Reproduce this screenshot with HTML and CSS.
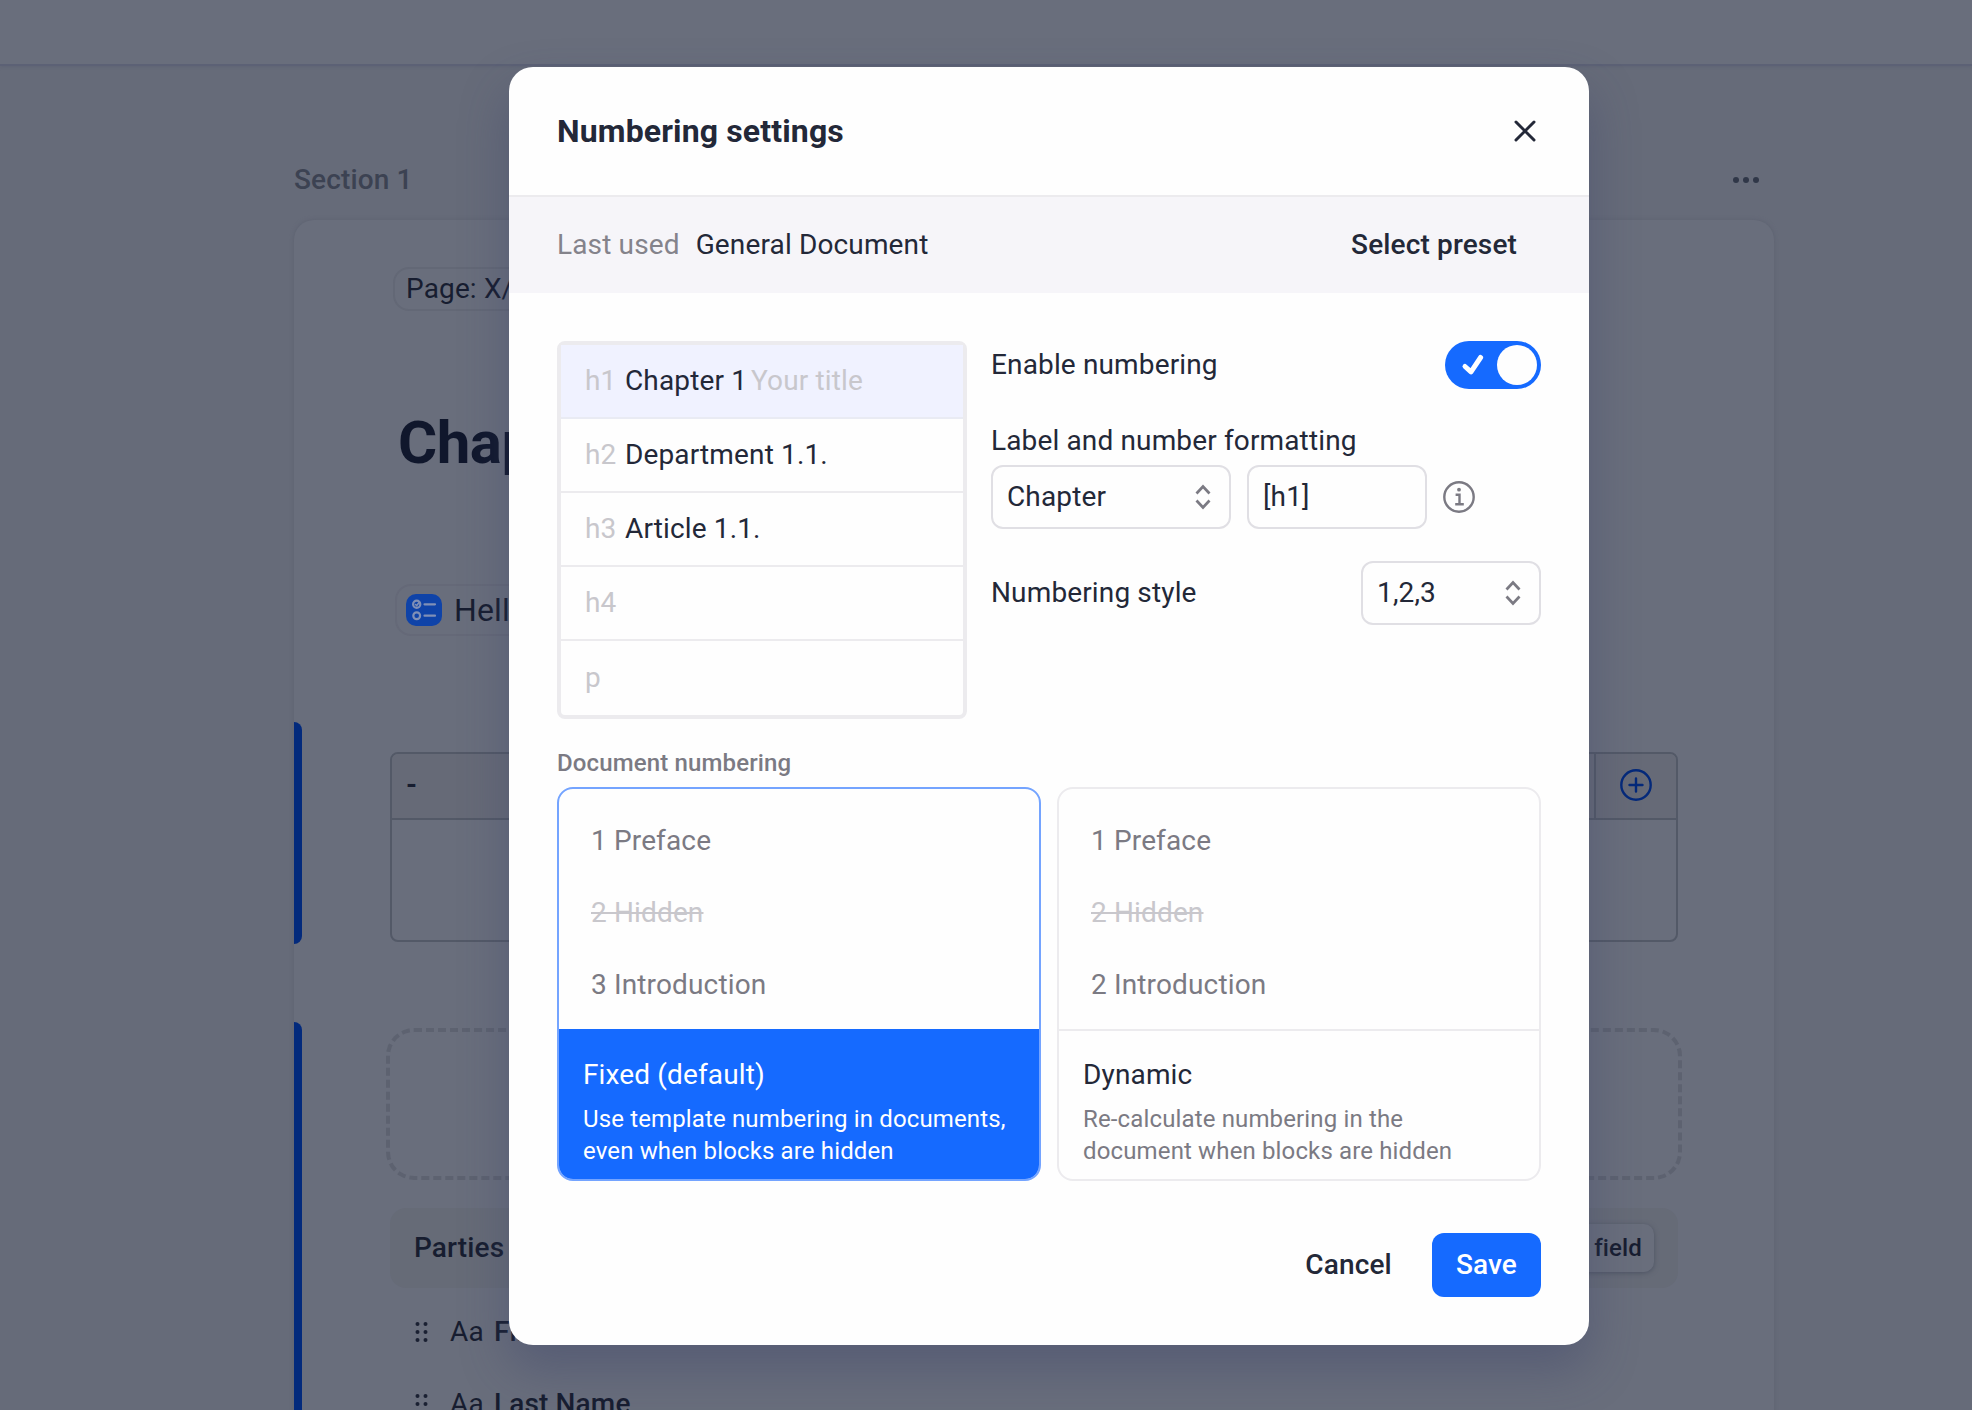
FILE: index.html
```html
<!DOCTYPE html>
<html lang="en">
<head>
<meta charset="utf-8">
<title>Numbering settings</title>
<link rel="stylesheet" href="styles.css">
</head>
<body>
<main class="editor">
  <div class="topbar"></div>
  <div class="section-head">
    <span>Section 1</span>
    <svg width="22" height="8" viewBox="0 0 22 8" fill="#303748"><circle cx="2" cy="4" r="3"/><circle cx="12" cy="4" r="3"/><circle cx="22" cy="4" r="3"/></svg>
  </div>
  <div class="paper">
    <div class="page-chip">Page: X/Y</div>
    <div class="doc-title">Chap</div>
    <div class="question-chip">
      <svg width="36" height="32" viewBox="0 0 36 32"><rect width="36" height="32" rx="10" fill="#0f43a8"/><g fill="none" stroke="#8090b6" stroke-width="2.2" stroke-linecap="round"><circle cx="10.700" cy="10.300" r="3.6"/><circle cx="10.700" cy="21.700" r="3.4"/><path d="M18.500 10.300h10.500M18.500 21.700h10.500"/><path d="M9.500 10.500l1.200 1 2.800-3.500" stroke-width="1.600"/></g></svg>
      <span>Hello</span>
    </div>
    <div class="block block-table">
      <div class="table">
        <div class="table-head"><span class="cell">-</span><span class="cell-add"><svg width="32" height="32" viewBox="0 0 32 32" fill="none" stroke="#04297a" stroke-width="2.4" stroke-linecap="round"><circle cx="16" cy="16" r="14.700"/><path d="M16 9.500v13M9.500 16h13"/></svg></span></div>
      </div>
    </div>
    <div class="block block-parties">
      <div class="dropzone"></div>
      <div class="parties"><span>Parties</span><span class="add-field">Add field</span></div>
      <div class="field-row"><svg width="14" height="22" viewBox="0 0 14 22"><use href="#grip"/></svg><span class="type">Aa</span><b>First Name</b></div>
      <div class="field-row"><svg width="14" height="22" viewBox="0 0 14 22"><use href="#grip"/></svg><span class="type">Aa</span><b>Last Name</b></div>
    </div>
  </div>
</main>

<div class="modal" role="dialog">
  <header class="modal-head">
    <h2>Numbering settings</h2>
    <svg width="24" height="24" viewBox="0 0 24 24" fill="none" stroke="#232838" stroke-width="3" stroke-linecap="round"><path d="M3 3l18 18M21 3L3 21"/></svg>
  </header>
  <div class="preset-bar"><span class="muted">Last used</span><span>General Document</span><span class="preset-btn">Select preset</span></div>
  <div class="modal-body">
    <div class="settings">
      <div class="levels">
        <div class="level active"><i>h1</i><span>Chapter 1</span><em>Your title</em></div>
        <div class="level"><i>h2</i><span>Department 1.1.</span></div>
        <div class="level"><i>h3</i><span>Article 1.1.</span></div>
        <div class="level"><i>h4</i></div>
        <div class="level"><i>p</i></div>
      </div>
      <div class="options">
        <div class="row toggle-row"><span>Enable numbering</span>
          <div class="toggle"><svg width="24" height="24" viewBox="0 0 24 24" fill="none" stroke="#fff" stroke-width="5" stroke-linecap="round" stroke-linejoin="round"><path d="M4 13.500L10 18.800 19.600 4.500"/></svg><span class="knob"></span></div>
        </div>
        <div class="label">Label and number formatting</div>
        <div class="row fields">
          <div class="control wide"><span>Chapter</span><svg width="16" height="24" viewBox="0 0 16 24"><use href="#updown"/></svg></div>
          <div class="control">[h1]</div>
          <svg width="32" height="32" viewBox="0 0 32 32" fill="none" stroke="#7b7a83" stroke-width="2.400"><circle cx="16" cy="16" r="14.700"/><path d="M12.600 13.700h3.900v9M12.200 23.300h8.600"/><circle cx="16" cy="8.700" r="1.900" fill="#7b7a83" stroke="none"/></svg>
        </div>
        <div class="row style-row"><span>Numbering style</span><div class="control"><span>1,2,3</span><svg width="16" height="24" viewBox="0 0 16 24"><use href="#updown"/></svg></div></div>
      </div>
    </div>
    <div class="caption">Document numbering</div>
    <div class="cards">
      <div class="card selected">
        <div class="preview"><div>1 Preface</div><div class="gone">2 Hidden</div><div>3 Introduction</div></div>
        <div class="info"><strong>Fixed (default)</strong><p>Use template numbering in documents,<br>even when blocks are hidden</p></div>
      </div>
      <div class="card">
        <div class="preview"><div>1 Preface</div><div class="gone">2 Hidden</div><div>2 Introduction</div></div>
        <div class="info"><strong>Dynamic</strong><p>Re-calculate numbering in the<br>document when blocks are hidden</p></div>
      </div>
    </div>
  </div>
  <footer class="modal-foot"><span class="btn">Cancel</span><span class="btn primary">Save</span></footer>
</div>

<svg width="0" height="0" class="defs">
  <defs>
    <g id="grip" fill="#1a2032"><circle cx="2.500" cy="3" r="2"/><circle cx="10.500" cy="3" r="2"/><circle cx="2.500" cy="11" r="2"/><circle cx="10.500" cy="11" r="2"/><circle cx="2.500" cy="19" r="2"/><circle cx="10.500" cy="19" r="2"/></g>
    <path id="updown" d="M1.500 8.500l6.500-7 6.500 7M1.500 15.500l6.500 7 6.500-7" fill="none" stroke="#7b7a83" stroke-width="2.700"/>
  </defs>
</svg>
</body>
</html>
```
FILE: styles.css
```css
* { box-sizing: border-box; }
body {
  margin: 0;
  width: 1972px;
  height: 1410px;
  overflow: hidden;
  position: relative;
  font: 400 28px/40px Roboto, "Liberation Sans", sans-serif;
  letter-spacing: 0.14px;
  color: #232838;
  background: #666b79;
}
svg { display: block; flex: none; overflow: visible; }
.defs { position: absolute; }

/* document behind the dialog */
.editor { height: 1410px; overflow: hidden; color: #171d30; }
.topbar { height: 66px; background: #696e7c; border-bottom: 2px solid #5c6175; box-shadow: 0 1px 3px #5f6475; }
.section-head {
  display: flex; justify-content: space-between; align-items: center;
  height: 154px; padding: 94px 216px 20px 294px;
  font-weight: 500; color: #3c4252;
}
.paper {
  width: 1480px; height: 1300px; margin-left: 294px; padding-top: 47px;
  border-radius: 20px; background: #696e7c; box-shadow: 0 0 4px #5c6170;
}
.page-chip {
  width: 180px; height: 44px; margin-left: 99px; padding: 0 11px; line-height: 40px;
  border: 2px solid #636876; border-radius: 16px;
}
.doc-title { margin: 92px 0 0 104px; font-size: 60px; line-height: 80px; font-weight: 700; letter-spacing: -0.5px; color: #10172c; }
.question-chip {
  display: flex; align-items: center; gap: 12px;
  width: 300px; height: 52px; margin: 101px 0 0 101px; padding: 0 9px;
  border: 2px solid #656978; border-radius: 16px; font-size: 32px;
}
.block { position: relative; }
.block::before { content: ""; position: absolute; left: 0; top: 0; width: 8px; height: 100%; border-radius: 0 8px 8px 0; background: #032a7c; }
.block-table { height: 222px; margin-top: 86px; padding: 30px 0 0 88px; }
.table { width: 1288px; height: 190px; margin-left: 8px; border: 2px solid #535967; border-radius: 8px; overflow: hidden; }
.table-head { display: flex; justify-content: space-between; height: 66px; line-height: 62px; background: #666a77; border-bottom: 2px solid #535967; }
.cell { padding-left: 14px; font-weight: 700; }
.cell-add { width: 82px; padding-bottom: 2px; border-left: 2px solid #535967; display: flex; align-items: center; justify-content: center; }
.block-parties { height: 500px; margin-top: 78px; padding: 6px 0 0 92px; }
.dropzone { width: 1296px; height: 152px; border: 4px dashed #5d6270; border-radius: 28px; }
.parties {
  display: flex; justify-content: space-between; align-items: center;
  width: 1288px; height: 80px; margin: 28px 0 0 4px; padding: 0 24px;
  border-radius: 16px; background: #666b77; font-weight: 500;
}
.add-field { padding: 0 12px; height: 48px; line-height: 48px; font-size: 24px; border-radius: 10px; background: #696e7c; box-shadow: 0 1px 5px #4d5363; }
.field-row { display: flex; align-items: center; height: 72px; padding: 16px 0 0 29px; }
.type { width: 44px; margin-left: 21px; }
.field-row b { font-weight: 500; }

/* dialog */
.modal {
  position: absolute; left: 509px; top: 67px; width: 1080px; height: 1278px;
  border-radius: 24px; background: #fefefe; overflow: hidden;
  box-shadow: 0 24px 48px rgba(58, 64, 105, .4);
}
.modal-head { display: flex; align-items: center; justify-content: space-between; height: 130px; padding: 0 52px 0 48px; border-bottom: 2px solid #ecebee; }
.modal-head h2 { margin: 0; font-size: 32px; font-weight: 700; }
.preset-bar { display: flex; align-items: center; gap: 16px; height: 96px; padding: 0 72px 0 48px; background: #f6f5f9; }
.muted { color: #84838b; }
.preset-btn { margin-left: auto; font-weight: 500; }
.modal-body { padding: 48px 48px 0; }
.settings { display: flex; gap: 24px; }
.levels { width: 410px; height: 378px; border: 4px solid #ecebee; border-radius: 8px; }
.level { display: flex; height: 74px; padding-left: 24px; line-height: 72px; border-bottom: 2px solid #ecebee; white-space: nowrap; }
.level:last-child { border: 0; line-height: 74px; }
.level.active { background: #f0f2ff; border-color: #e9ebf3; }
.level i { width: 40px; font-style: normal; color: #c8c7cc; }
.level em { margin-left: 4px; font-style: normal; color: #c8c7cc; }
.options { width: 550px; }
.row { display: flex; align-items: center; }
.toggle-row { justify-content: space-between; height: 48px; }
.toggle { display: flex; align-items: center; justify-content: space-between; width: 96px; height: 48px; padding: 4px 4px 4px 16px; border-radius: 24px; background: #156aff; }
.knob { width: 40px; height: 40px; border-radius: 50%; background: #fefefe; }
.label { margin-top: 32px; height: 44px; line-height: 40px; }
.fields { gap: 16px; }
.control { display: flex; align-items: center; justify-content: space-between; width: 180px; height: 64px; padding: 0 18px 0 14px; border: 2px solid #e0dfe4; border-radius: 12px; }
.wide { width: 240px; }
.style-row { justify-content: space-between; margin-top: 32px; }
.caption { margin-top: 24px; height: 44px; line-height: 40px; font-size: 24px; font-weight: 500; color: #7b7a83; }
.cards { display: flex; gap: 16px; }
.card { width: 484px; height: 394px; border: 2px solid #ecebee; border-radius: 16px; overflow: hidden; }
.preview { height: 242px; padding: 16px 32px; line-height: 72px; border-bottom: 2px solid #ecebee; color: #7b7a83; }
.gone { color: #c8c7cc; text-decoration: line-through; width: max-content; }
.info { padding: 24px; height: 148px; }
.info strong { display: block; font-weight: 400; }
.info p { margin: 8px 0 0; font-size: 24px; line-height: 32px; color: #7b7a83; }
.selected { border-color: #74a4ff; }
.selected .preview { height: 240px; border: 0; }
.selected .info { height: 150px; background: #156aff; color: #fff; padding-top: 26px; }
.selected .info p { color: #fff; }
.modal-foot { display: flex; justify-content: flex-end; gap: 16px; padding: 52px 48px 0; }
.btn { height: 64px; padding: 0 24px; line-height: 64px; font-weight: 500; border-radius: 12px; }
.primary { background: #156aff; color: #fff; }
```
